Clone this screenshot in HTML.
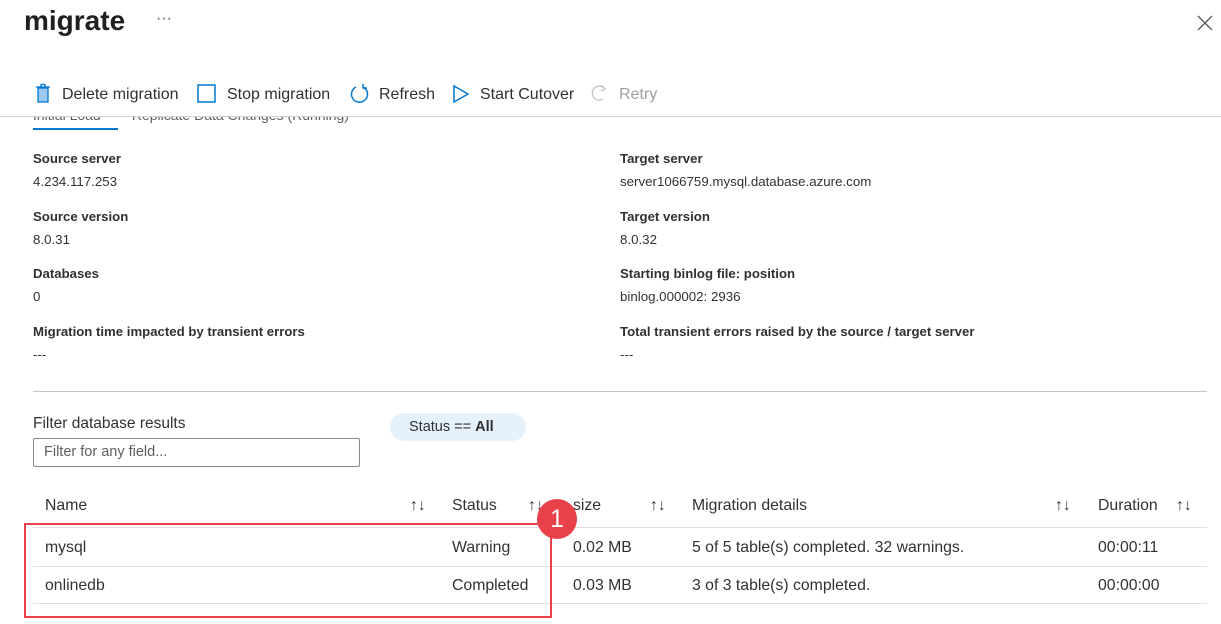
<!DOCTYPE html>
<html><head><style>
body{margin:0;width:1221px;height:624px;background:#fff;font-family:"Liberation Sans",sans-serif;color:#323130;position:relative;overflow:hidden}
.a{position:absolute;white-space:nowrap}
.lb{font-size:13.2px;font-weight:bold;color:#323130}
.v{font-size:13.3px;color:#323130}
.tb{font-size:16px;top:86px}
.h{font-size:15.8px;top:497px}
.r{font-size:15.8px}
.line{position:absolute;height:1px;background:#e1dfdd}
</style></head><body>
<div class="a" style="left:24px;top:5px;font-size:28px;font-weight:bold;color:#201f1e">migrate</div>
<div class="a" style="left:156px;top:10px;font-size:16px;color:#605e5c">···</div>
<svg class="a" style="left:1196px;top:14px" width="18" height="18"><path d="M2 2L16 16M16 2L2 16" stroke="#605e5c" stroke-width="1.4"/></svg>

<svg class="a" style="left:35px;top:83px" width="16" height="20"><rect x="3" y="5" width="10" height="14" fill="#9dc9f0" stroke="#0078d4" stroke-width="1.3"/><path d="M1 4H15M6 4V1.5H10V4" stroke="#0078d4" stroke-width="1.3" fill="none"/></svg>
<div class="a tb" style="left:62px">Delete migration</div>
<svg class="a" style="left:197px;top:84px" width="20" height="20"><rect x="1" y="1" width="17" height="17" fill="none" stroke="#0078d4" stroke-width="1.5"/></svg>
<div class="a tb" style="left:227px">Stop migration</div>
<svg class="a" style="left:349px;top:83px" width="22" height="22"><path d="M7 4A8 8 0 1 0 14 4" fill="none" stroke="#0078d4" stroke-width="1.5"/><path d="M14 1V5H18" fill="none" stroke="#0078d4" stroke-width="1.5"/></svg>
<div class="a tb" style="left:379px">Refresh</div>
<svg class="a" style="left:452px;top:84px" width="18" height="20"><path d="M2 2L16 10L2 18Z" fill="none" stroke="#0078d4" stroke-width="1.5"/></svg>
<div class="a tb" style="left:480px">Start Cutover</div>
<svg class="a" style="left:591px;top:83px" width="18" height="20"><path d="M14 6A7 7 0 1 0 12 16" fill="none" stroke="#c8c6c4" stroke-width="1.4"/><path d="M10 2L14 6L10 8" fill="none" stroke="#c8c6c4" stroke-width="1.4"/></svg>
<div class="a tb" style="left:619px;color:#a19f9d">Retry</div>
<div class="a" style="left:0;top:116px;width:1221px;height:8px;overflow:hidden"><div class="a" style="left:33px;top:-9px;font-size:14px;color:#605e5c">Initial Load&nbsp;&nbsp;&nbsp;&nbsp;&nbsp;&nbsp;&nbsp;&nbsp;Replicate Data Changes (Running)</div></div>
<div class="line" style="left:0;top:116px;width:1221px;background:#d2d0ce"></div>
<div class="a" style="left:33px;top:128px;width:85px;height:2px;background:#0078d4"></div>

<div class="a lb" style="left:33px;top:151px">Source server</div>
<div class="a v" style="left:33px;top:174px">4.234.117.253</div>
<div class="a lb" style="left:33px;top:209px">Source version</div>
<div class="a v" style="left:33px;top:232px">8.0.31</div>
<div class="a lb" style="left:33px;top:266px">Databases</div>
<div class="a v" style="left:33px;top:289px">0</div>
<div class="a lb" style="left:33px;top:324px">Migration time impacted by transient errors</div>
<div class="a v" style="left:33px;top:347px">---</div>
<div class="a lb" style="left:620px;top:151px">Target server</div>
<div class="a v" style="left:620px;top:174px">server1066759.mysql.database.azure.com</div>
<div class="a lb" style="left:620px;top:209px">Target version</div>
<div class="a v" style="left:620px;top:232px">8.0.32</div>
<div class="a lb" style="left:620px;top:266px">Starting binlog file: position</div>
<div class="a v" style="left:620px;top:289px">binlog.000002: 2936</div>
<div class="a lb" style="left:620px;top:324px">Total transient errors raised by the source / target server</div>
<div class="a v" style="left:620px;top:347px">---</div>
<div class="line" style="left:33px;top:391px;width:1174px;background:#c8c6c4"></div>

<div class="a" style="left:33px;top:415px;font-size:15.5px">Filter database results</div>
<div class="a" style="left:33px;top:438px;width:325px;height:27px;border:1px solid #8a8886;border-radius:2px"></div>
<div class="a" style="left:44px;top:444px;font-size:14.5px;color:#605e5c">Filter for any field...</div>
<div class="a" style="left:390px;top:413px;width:136px;height:28px;border-radius:14px;background:#e5f1fb"></div>
<div class="a" style="left:409px;top:419px;font-size:14.5px">Status == <b>All</b></div>

<div class="a h" style="left:45px">Name</div>
<div class="a h" style="left:410px">↑↓</div>
<div class="a h" style="left:452px">Status</div>
<div class="a h" style="left:528px">↑↓</div>
<div class="a h" style="left:573px">size</div>
<div class="a h" style="left:650px">↑↓</div>
<div class="a h" style="left:692px">Migration details</div>
<div class="a h" style="left:1055px">↑↓</div>
<div class="a h" style="left:1098px">Duration</div>
<div class="a h" style="left:1176px">↑↓</div>
<div class="line" style="left:33px;top:527px;width:1174px"></div>
<div class="a r" style="left:45px;top:539px">mysql</div>
<div class="a r" style="left:452px;top:539px">Warning</div>
<div class="a r" style="left:573px;top:539px">0.02 MB</div>
<div class="a r" style="left:692px;top:539px">5 of 5 table(s) completed. 32 warnings.</div>
<div class="a r" style="left:1098px;top:539px">00:00:11</div>
<div class="line" style="left:33px;top:566px;width:1174px"></div>
<div class="a r" style="left:45px;top:577px">onlinedb</div>
<div class="a r" style="left:452px;top:577px">Completed</div>
<div class="a r" style="left:573px;top:577px">0.03 MB</div>
<div class="a r" style="left:692px;top:577px">3 of 3 table(s) completed.</div>
<div class="a r" style="left:1098px;top:577px">00:00:00</div>
<div class="line" style="left:33px;top:603px;width:1174px"></div>

<div class="a" style="left:24px;top:523px;width:524px;height:91px;border:2.5px solid #e8414a"></div>
<div class="a" style="left:537px;top:499px;width:40px;height:40px;border-radius:50%;background:#e8414a;color:#fff;font-size:25px;text-align:center;line-height:40px">1</div>
</body></html>
